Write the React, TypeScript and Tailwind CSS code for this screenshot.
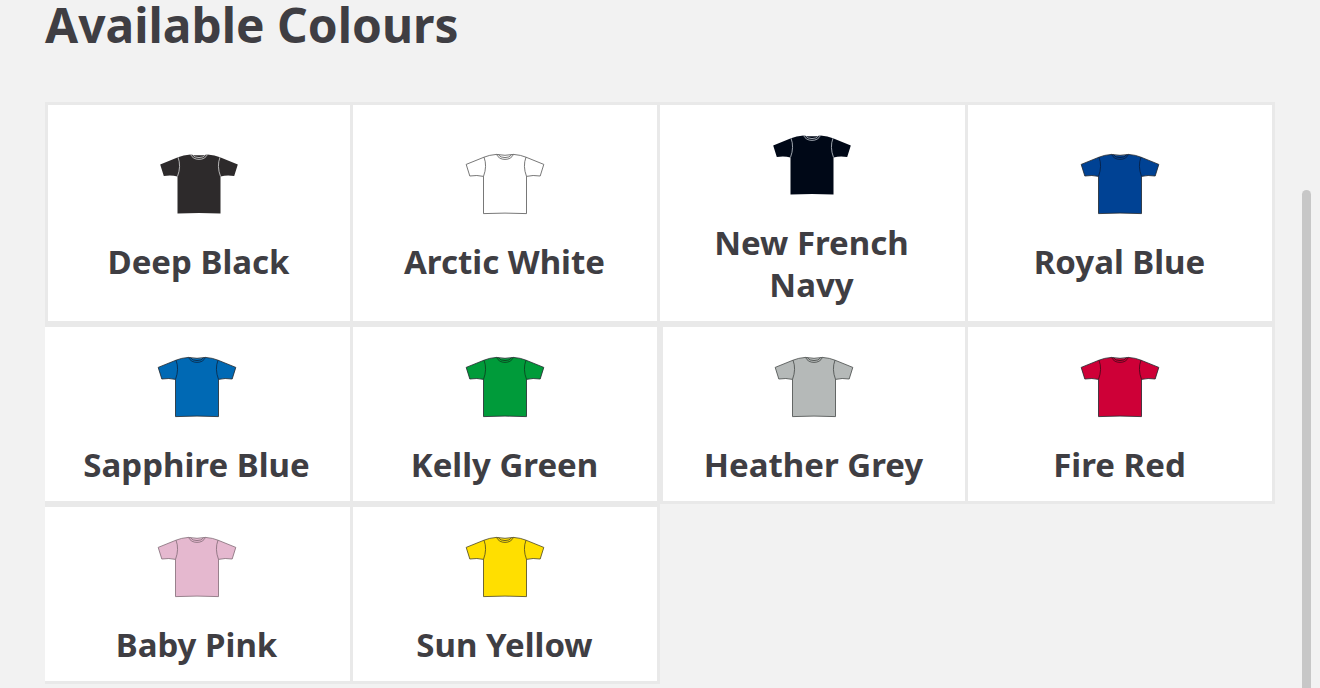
type Colour = {
  name: string;
  fill: string;
  outline: string;
  seam: string;
  cell: string;
};

const DARK = "#20252b";

const colours: Colour[] = [
  { name: "Deep Black", fill: "#2d2a2b", outline: "none", seam: "#d8d8d8", cell: "border-l-3 pt-12" },
  { name: "Arctic White", fill: "#ffffff", outline: "#555555", seam: "#555555", cell: "pt-12" },
  { name: "New French Navy", fill: "#000817", outline: "none", seam: "#c4cad2", cell: "pt-[29px] pr-px" },
  { name: "Royal Blue", fill: "#004294", outline: DARK, seam: "#071c3c", cell: "pt-12" },
  { name: "Sapphire Blue", fill: "#0069b4", outline: DARK, seam: "#0b2540", cell: "pt-[29px] pr-px" },
  { name: "Kelly Green", fill: "#009b3a", outline: DARK, seam: "#0b3a1c", cell: "pt-[29px]" },
  { name: "Heather Grey", fill: "#b5b9b8", outline: "#444746", seam: "#444746", cell: "border-l-3 pt-[29px]" },
  { name: "Fire Red", fill: "#ce0037", outline: DARK, seam: "#3d0815", cell: "pt-[29px]" },
  { name: "Baby Pink", fill: "#e5b8cf", outline: "#806a75", seam: "#806a75", cell: "pt-[29px] pr-px" },
  { name: "Sun Yellow", fill: "#ffdf00", outline: "#4a4420", seam: "#4a4420", cell: "pt-[29px]" },
];

function Shirt({ fill, outline, seam }: Pick<Colour, "fill" | "outline" | "seam">) {
  return (
    <svg viewBox="0 0 80 62" className="h-[62px] w-20 shrink-0" fill="none" strokeWidth="0.8">
      <path
        d="M1.2 11.4 L19 4.2 Q24 2 31.5 1.4 Q40 3.2 48.5 1.4 Q56 2 61 4.2 L78.8 11.4 L75.2 23 Q68 21.8 61.5 23.4 L61.5 60.6 Q40 59.6 18.5 60.6 L18.5 23.4 Q12 21.8 4.8 23 Z"
        fill={fill}
        stroke={outline}
        strokeLinejoin="round"
      />
      <path d="M19 4.2 Q22.4 13 18.5 23.4 M61 4.2 Q57.6 13 61.5 23.4" stroke={seam} />
      <path d="M31.5 1.4 Q34 6.4 40 6.4 Q46 6.4 48.5 1.4 M33.5 1.9 Q35.5 4.6 40 4.6 Q44.5 4.6 46.5 1.9" stroke={seam} />
    </svg>
  );
}

export default function App() {
  return (
    <div className="flex h-[688px] w-[1320px] justify-between overflow-hidden bg-[#f2f2f2] pl-[45px] font-['Noto_Sans',sans-serif] font-bold text-[#3f3e43]">
      <main className="w-[1230px]">
        <h1 className="h-[102px] text-[47.9px] leading-[49px] whitespace-nowrap">Available Colours</h1>
        <ul className="grid grid-cols-[308px_307px_308px_307px] grid-rows-[222px_180px_180px]">
          {colours.map((colour) => (
            <li
              key={colour.name}
              className={`flex flex-col items-center border-t-3 border-r-3 border-b-3 border-[#e9e9e9] bg-white ${colour.cell}`}
            >
              <Shirt fill={colour.fill} outline={colour.outline} seam={colour.seam} />
              <p className="mt-[26px] w-[240px] pr-px text-center text-[33px] leading-[42px]">{colour.name}</p>
            </li>
          ))}
        </ul>
      </main>
      <div className="mt-[190px] mr-[9px] w-[9px] rounded-t-full bg-[#c7c7c7]" />
    </div>
  );
}
